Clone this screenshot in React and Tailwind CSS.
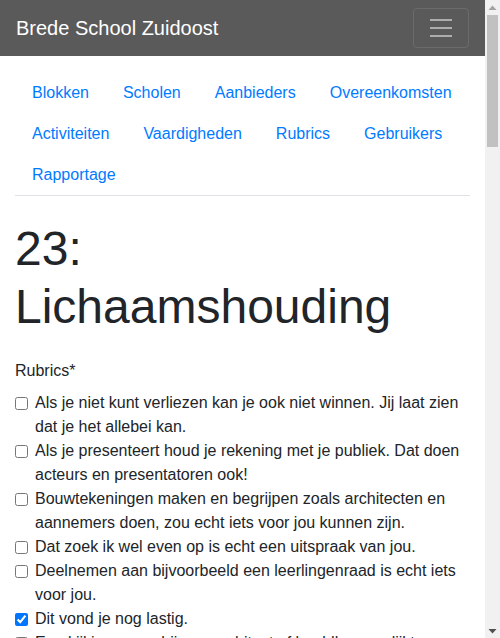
import React from "react";

const links = ["Blokken", "Scholen", "Aanbieders", "Overeenkomsten", "Activiteiten", "Vaardigheden", "Rubrics", "Gebruikers", "Rapportage"];

const rubrics = [
  { t: "Als je niet kunt verliezen kan je ook niet winnen. Jij laat zien dat je het allebei kan." },
  { t: "Als je presenteert houd je rekening met je publiek. Dat doen acteurs en presentatoren ook!" },
  { t: "Bouwtekeningen maken en begrijpen zoals architecten en aannemers doen, zou echt iets voor jou kunnen zijn." },
  { t: "Dat zoek ik wel even op is echt een uitspraak van jou." },
  { t: "Deelnemen aan bijvoorbeeld een leerlingenraad is echt iets voor jou." },
  { t: "Dit vond je nog lastig.", c: true },
  { t: "Een kijkje nemen bij een architect of beeldhouwer lijkt me echt iets voor jou." },
  { t: "Een presentatie geven vind je leuk om te doen." },
];

export default function App() {
  return (
    <div className="h-screen flex overflow-hidden bg-white text-[#212529] text-[16px] leading-[24px]" style={{ fontFamily: '"Liberation Sans", Arial, sans-serif' }}>
      <main className="flex-1 min-w-0 overflow-hidden">
        <nav className="h-[56px] bg-[#5a5a5a] px-4 flex items-center justify-between">
          <span className="text-white text-[20px] leading-[30px]">Brede School Zuidoost</span>
          <button className="w-[56px] h-[40px] border border-white/10 rounded flex items-center justify-center">
            <svg width="30" height="30" viewBox="0 0 30 30">
              <path d="M4 7h22M4 15h22M4 23h22" stroke="rgba(255,255,255,0.5)" strokeWidth="2" strokeLinecap="butt" />
            </svg>
          </button>
        </nav>
        <div className="px-[15px] pb-8">
          <ul className="mt-4 flex flex-wrap border-b border-[#dee2e6]">
            {links.map((l) => (
              <li key={l} className="-mb-px">
                <a className="block px-4 py-2 border border-transparent text-[#007bff] leading-[24px]">{l}</a>
              </li>
            ))}
          </ul>
          <h1 className="mt-6 mb-2 text-[48px] leading-[57.6px] font-normal">23: Lichaamshouding</h1>
          <div className="mt-[24px]">
            <label className="block mb-2">Rubrics*</label>
            {rubrics.map((r, i) => (
              <div key={i} className="relative pl-5">
                <input
                  type="checkbox"
                  readOnly
                  defaultChecked={!!r.c}
                  className="absolute left-0 top-[6px] w-[13px] h-[13px] m-0"
                />
                <label>{r.t}</label>
              </div>
            ))}
          </div>
        </div>
      </main>
      <aside className="w-[15px] shrink-0 bg-[#f1f1f1] flex flex-col">
        <div className="h-[15px] flex items-center justify-center">
          <svg width="9" height="6" viewBox="0 0 9 6"><path d="M4.5 0.5L8.5 5H0.5Z" fill="#a3a3a3" /></svg>
        </div>
        <div className="mx-[2px] h-[132px] bg-[#c1c1c1]" />
        <div className="flex-1" />
        <div className="h-[15px] flex items-center justify-center">
          <svg width="9" height="6" viewBox="0 0 9 6"><path d="M0.5 1H8.5L4.5 5.5Z" fill="#505050" /></svg>
        </div>
      </aside>
    </div>
  );
}
